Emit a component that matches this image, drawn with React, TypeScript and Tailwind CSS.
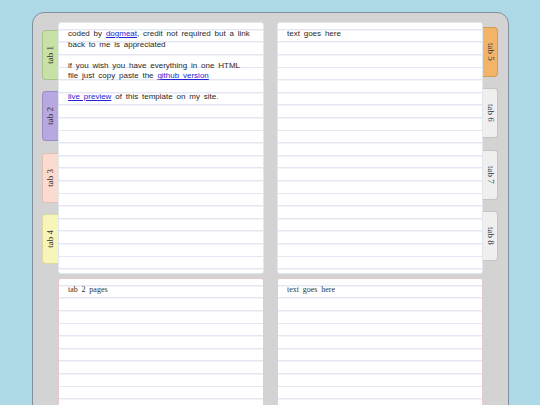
import React from "react";

const lined =
  "bg-white bg-[image:repeating-linear-gradient(to_bottom,transparent_0px,transparent_5.8px,#e4e7f2_5.8px,#e4e7f2_6.8px,#f2f4f9_6.8px,#f2f4f9_7.6px,transparent_7.6px,transparent_12.6px)]";

const leftTabs = [
  { label: "tab 1", cls: "bg-[#c7e1a6] border-[#a9c48a]" },
  { label: "tab 2", cls: "bg-[#b7a8e1] border-[#9b8cc6]" },
  { label: "tab 3", cls: "bg-[#fbdad0] border-[#e2c0b6]" },
  { label: "tab 4", cls: "bg-[#f7f5ba] border-[#dcd99e]" },
];

const rightTabs = [
  { label: "tab 5", cls: "bg-[#f3b469] border-[#d79b55]" },
  { label: "tab 6", cls: "bg-[#efefef] border-[#c4c4c4]" },
  { label: "tab 7", cls: "bg-[#efefef] border-[#c4c4c4]" },
  { label: "tab 8", cls: "bg-[#efefef] border-[#c4c4c4]" },
];

function A({ children }: { children: React.ReactNode }) {
  return <a className="text-[#2424d6] underline">{children}</a>;
}

export default function App() {
  return (
    <div className="w-[540px] h-[405px] overflow-hidden bg-[#add8e6] pt-[12px] pl-[32px]">
      <div className="w-[477px] h-[430px] rounded-[12px] border border-[#7f8f9c] bg-[#d3d3d3] flex pt-[9px] pl-[9px]">
        {/* left tabs */}
        <div className="w-[16px] flex flex-col pt-[8px] gap-[11.3px]">
          {leftTabs.map((t) => (
            <div
              key={t.label}
              className={`h-[50px] w-[16px] rounded-l-[4px] border border-r-0 ${t.cls} flex items-center justify-center`}
            >
              <span className="[writing-mode:vertical-rl] rotate-180 text-[9px] leading-none text-[#333] font-['Liberation_Serif',serif]">
                {t.label}
              </span>
            </div>
          ))}
        </div>

        {/* pages */}
        <div className="grid grid-cols-[206px_206px] grid-rows-[252px_200px] gap-x-[13px] gap-y-[4px]">
          <div
            className={`${lined} rounded-[3px] border border-[#e0e8ee] px-[9px] pt-[6px] text-[8px] leading-[10.5px] [word-spacing:1.6px] text-[#1f1f1f] font-['Liberation_Sans',Arial,sans-serif]`}
          >
            <p className="mb-[10.5px]">
              coded by <A>dogmeat</A>, credit not required but a link back to me is appreciated
            </p>
            <p className="mb-[10.5px] pr-[8px]">
              if you wish you have everything in one HTML file just copy paste the{" "}
              <A>github version</A>
            </p>
            <p>
              <A>live preview</A> of this template on my site.
            </p>
          </div>
          <div
            className={`${lined} rounded-[3px] border border-[#e0e8ee] px-[9px] pt-[6px] text-[8px] leading-[10.5px] [word-spacing:1.6px] text-[#1f1f1f] font-['Liberation_Sans',Arial,sans-serif]`}
          >
            <p>text goes here</p>
          </div>
          <div
            className={`${lined} rounded-t-[3px] border border-[#e8cacc] px-[9px] pt-[6px] text-[8px] leading-[10.5px] [word-spacing:1.8px] text-[#333] font-['Liberation_Serif',serif]`}
          >
            <p>tab 2 pages</p>
          </div>
          <div
            className={`${lined} rounded-t-[3px] border border-[#e8cacc] px-[9px] pt-[6px] text-[8px] leading-[10.5px] [word-spacing:1.8px] text-[#333] font-['Liberation_Serif',serif]`}
          >
            <p>text goes here</p>
          </div>
        </div>

        {/* right tabs */}
        <div className="w-[15px] flex flex-col pt-[5px] gap-[11.3px]">
          {rightTabs.map((t) => (
            <div
              key={t.label}
              className={`h-[50px] w-[15px] rounded-r-[4px] border border-l-0 ${t.cls} flex items-center justify-center`}
            >
              <span className="[writing-mode:vertical-rl] text-[9px] leading-none text-[#333] font-['Liberation_Serif',serif]">
                {t.label}
              </span>
            </div>
          ))}
        </div>
      </div>
    </div>
  );
}
